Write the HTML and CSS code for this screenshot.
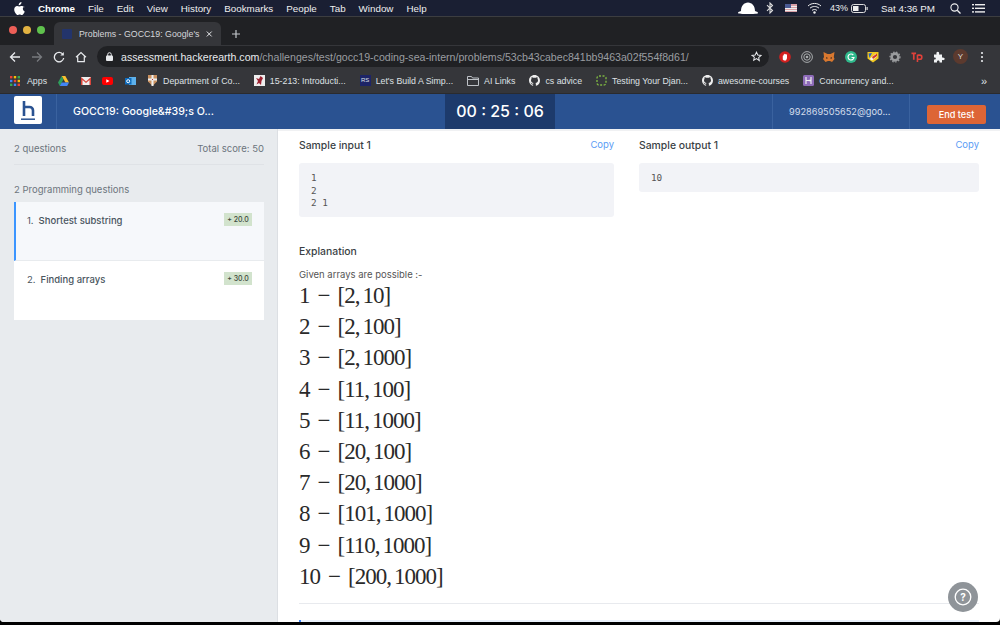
FILE: index.html
```html
<!DOCTYPE html>
<html lang="en">
<head>
    <meta charset="UTF-8">
    <title>Problems - GOCC19</title>
    <link rel="stylesheet" href="styles.css">
</head>
<body>

    <div class="menubar">
        <svg class="apple" width="11" height="13" viewBox="0 0 22 26"><path fill="#fff" d="M15 0c.2 2-.5 3.500-1.500 4.700-1 1.200-2.600 2.100-4.100 2-.2-1.800.6-3.600 1.500-4.600C12.100 1 13.800.2 15 0zM20.500 8.800c-1.700 1.100-2.800 2.800-2.800 4.800 0 2.400 1.400 4.300 3.800 5.200-.6 1.700-1.400 3.200-2.400 4.600-1.100 1.500-2.200 2.600-3.800 2.600s-2.100-1-4-1-2.500 1-4 1-2.700-1.300-3.900-3C1.400 20.600.4 17.700.4 15c0-4.600 3-7.100 5.900-7.100 1.600 0 2.900 1 4 1s2.500-1.100 4.300-1.100c2.300 0 4.400.9 5.900 3z"/></svg>
        <span class="menu-app">Chrome</span>
        <span>File</span>
        <span>Edit</span>
        <span>View</span>
        <span>History</span>
        <span>Bookmarks</span>
        <span>People</span>
        <span>Tab</span>
        <span>Window</span>
        <span>Help</span>
        <div class="menu-status">
            <svg width="22" height="12" viewBox="0 0 22 12"><path fill="#fff" d="M1 11c0-1 1.500-1.500 3-2 0-5 3-8.500 7-8.500s7 3.500 7 8.500c1.500.5 3 1 3 2 0 .6-1 1-10 1S1 11.600 1 11z"/></svg>
            <svg class="st-bt" width="8" height="12" viewBox="0 0 8 12"><path fill="none" stroke="#ddd" stroke-width="1.100" d="M1 3.200l5.500 5.300L4 11V1l2.500 2.500L1 8.800"/></svg>
            <svg class="st-flag" width="12" height="8" viewBox="0 0 12 8"><rect width="12" height="8" fill="#d9a0a6"/><rect y="2" width="12" height="1" fill="#eee"/><rect y="4" width="12" height="1" fill="#eee"/><rect y="6" width="12" height="1" fill="#eee"/><rect width="6" height="4" fill="#4a5a94"/></svg>
            <svg class="st-wifi" width="15" height="12" viewBox="0 0 15 12"><g fill="none" stroke="#eee" stroke-width="1"><path d="M1 4c3.500-3.400 9.500-3.400 13 0"/><path d="M3 6.200c2.500-2.300 6.500-2.300 9 0"/><path d="M5 8.400c1.400-1.200 3.600-1.200 5 0"/></g><circle cx="7.500" cy="10.500" r="1.200" fill="#eee"/></svg>
            <span class="st-pct">43%</span>
            <svg class="st-batt" width="17" height="9" viewBox="0 0 17 9"><rect x=".5" y=".5" width="14" height="8" rx="2" fill="none" stroke="#ddd"/><rect x="2" y="2" width="5.500" height="5" fill="#eee"/><rect x="15.500" y="3" width="1.200" height="3" fill="#ddd"/></svg>
            <span class="st-time">Sat 4:36 PM</span>
            <svg class="st-search" width="11" height="11" viewBox="0 0 11 11"><circle cx="4.500" cy="4.500" r="3.600" fill="none" stroke="#eee" stroke-width="1.100"/><path d="M7.200 7.200L10.500 10.500" stroke="#eee" stroke-width="1.300"/></svg>
            <svg class="st-list" width="13" height="9" viewBox="0 0 13 9"><g fill="#eee"><rect width="2" height="1.400"/><rect y="3.600" width="2" height="1.400"/><rect y="7.200" width="2" height="1.400"/><rect x="3" width="10" height="1.400"/><rect x="3" y="3.600" width="10" height="1.400"/><rect x="3" y="7.200" width="10" height="1.400"/></g></svg>
        </div>
    </div>

    <div class="tabstrip">
        <div class="lights">
            <i class="light red"></i>
            <i class="light yellow"></i>
            <i class="light green"></i>
        </div>
        <div class="tab">
            <i class="tab-favicon"></i>
            <span class="tab-title">Problems - GOCC19: Google's</span>
            <svg width="8" height="8" viewBox="0 0 8 8"><path d="M1 1l6 6M7 1L1 7" stroke="#e8eaed" stroke-width="1.200"/></svg>
        </div>
        <svg class="new-tab" width="10" height="10" viewBox="0 0 10 10"><path d="M5 1v8M1 5h8" stroke="#c4c7cc" stroke-width="1.200"/></svg>
    </div>

    <div class="toolbar">
        <svg class="nav" width="12" height="12" viewBox="0 0 12 12"><path d="M11 6H2M6 1.500L1.500 6 6 10.500" fill="none" stroke="#e8eaed" stroke-width="1.300"/></svg>
        <svg class="nav" width="12" height="12" viewBox="0 0 12 12"><path d="M1 6h9M6 1.500L10.500 6 6 10.500" fill="none" stroke="#777a7e" stroke-width="1.300"/></svg>
        <svg class="nav" width="12" height="12" viewBox="0 0 12 12"><path d="M10 3.500A4.700 4.700 0 1 0 10.700 7" fill="none" stroke="#e8eaed" stroke-width="1.300"/><path d="M10.800 1v3.500H7.300z" fill="#e8eaed"/></svg>
        <svg class="nav" width="12" height="12" viewBox="0 0 12 12"><path d="M1 6.200L6 1.500l5 4.700M2.700 5.500v5.200h6.600V5.500" fill="none" stroke="#e8eaed" stroke-width="1.200"/></svg>
        <div class="omnibox">
            <svg width="7" height="9" viewBox="0 0 7 9"><rect y="3.500" width="7" height="5.500" rx="1" fill="#e8eaed"/><path d="M1.700 4V2.500a1.800 1.800 0 0 1 3.600 0V4" fill="none" stroke="#e8eaed"/></svg>
            <span class="url"><b>assessment.hackerearth.com</b>/challenges/test/gocc19-coding-sea-intern/problems/53cb43cabec841bb9463a02f554f8d61/</span>
            <svg class="star" width="11" height="11" viewBox="0 0 24 24"><path d="M12 2.500l2.900 6.300 6.900.8-5.100 4.700 1.400 6.800L12 16.700l-6.100 3.400 1.400-6.800L2.200 9.600l6.900-.8z" fill="none" stroke="#e8eaed" stroke-width="2.200"/></svg>
        </div>
        <div class="extensions">
            <svg width="12" height="12" viewBox="0 0 12 12"><circle cx="6" cy="6" r="5.800" fill="#d3201f"/><path d="M3.800 8.500V5c0-1 1-1 1-.2V3.500c0-1 1-1 1.100 0 .1-.8 1.100-.8 1.100 0 .3-.4 1-.2 1 .4v3.400L7 9.500H5z" fill="#fff"/></svg>
            <svg width="12" height="12" viewBox="0 0 12 12"><g fill="none" stroke="#a9abad"><circle cx="6" cy="6" r="5.400"/><circle cx="6" cy="6" r="3.200"/></g><circle cx="6" cy="6" r="1.300" fill="#a9abad"/></svg>
            <svg width="12" height="12" viewBox="0 0 12 12"><path d="M.5 1l4 2h3l4-2-.7 5 .7 2-2.500 3L7 10H5l-2.500 1L0 8l1-2z" fill="#d9782f"/><path d="M3 6l2 1-1.500 1zM9 6L7 7l1.500 1z" fill="#3c2a20"/></svg>
            <svg width="12" height="12" viewBox="0 0 12 12"><circle cx="6" cy="6" r="6" fill="#2fb98c"/><path d="M8.300 4A3 3 0 1 0 9 6.500H6.500" fill="none" stroke="#fff" stroke-width="1.200"/></svg>
            <svg width="12" height="12" viewBox="0 0 12 12"><path d="M.5 1h11v6.500L6 11.500.5 7.500z" fill="#f2c81e"/><path d="M2.500 8L9 2.500l1 3L5 9.500z" fill="#f4f4f4"/><path d="M5 6l5-3.500v2.500L6 8z" fill="#d23a2c"/><path d="M1.500 2.500L5 2 2.500 7z" fill="#2b5fc4"/></svg>
            <svg width="12" height="12" viewBox="0 0 12 12"><circle cx="6" cy="6" r="3.400" fill="none" stroke="#9a9c9e" stroke-width="2.600"/><circle cx="6" cy="6" r="5" fill="none" stroke="#9a9c9e" stroke-width="1.200" stroke-dasharray="1.500 1.500"/></svg>
            <svg width="12" height="12" viewBox="0 0 13 12"><path d="M.5 2h5M3 2v7" fill="none" stroke="#e0413a" stroke-width="1.800"/><path d="M7 3.500v8M7 4h2.500a2 2 0 0 1 0 4.500H7" fill="none" stroke="#e0413a" stroke-width="1.700"/></svg>
            <svg width="12" height="12" viewBox="0 0 12 12"><path d="M1 3.500h2.500C3 1.500 4 .8 4.800.8S6.600 1.500 6 3.500h3v3c1.800-.4 2.700.5 2.700 1.300S10.800 9.500 9 9v2.500H6.500c.3-1.500-.4-2-1.200-2s-1.600.5-1.300 2H1V8.500c1.200.2 1.800-.3 1.800-1S2.200 6.200 1 6.500z" fill="#f1f3f4"/></svg>
            <span class="avatar">Y</span>
            <svg width="12" height="12" viewBox="0 0 12 12"><g fill="#e8eaed"><circle cx="6" cy="2" r="1.100"/><circle cx="6" cy="6" r="1.100"/><circle cx="6" cy="10" r="1.100"/></g></svg>
        </div>
    </div>

    <div class="bookmarks">
        <div class="bm bm-apps">
            <svg width="10" height="10" viewBox="0 0 10 10"><g><rect width="2.400" height="2.400" fill="#ea4335"/><rect x="3.800" width="2.400" height="2.400" fill="#fbbc05"/><rect x="7.600" width="2.400" height="2.400" fill="#34a853"/><rect y="3.800" width="2.400" height="2.400" fill="#4285f4"/><rect x="3.800" y="3.800" width="2.400" height="2.400" fill="#ea4335"/><rect x="7.600" y="3.800" width="2.400" height="2.400" fill="#fbbc05"/><rect y="7.600" width="2.400" height="2.400" fill="#34a853"/><rect x="3.800" y="7.600" width="2.400" height="2.400" fill="#4285f4"/><rect x="7.600" y="7.600" width="2.400" height="2.400" fill="#ea4335"/></g></svg>
            <span>Apps</span>
        </div>
        <svg class="bm-icon" width="11" height="10" viewBox="0 0 11 10"><path d="M3.700 0h3.600L11 6.500H7.400z" fill="#fbc02d"/><path d="M3.700 0L0 6.500 1.800 10l3.700-6.500z" fill="#2e9e5b"/><path d="M1.800 10h7.400L11 6.500H3.700z" fill="#4285f4"/></svg>
        <svg class="bm-icon" width="10" height="8" viewBox="0 0 10 8"><rect width="10" height="8" fill="#eee"/><path d="M0 0l5 4.500L10 0v8H8.500V3L5 6 1.500 3v5H0z" fill="#d8453b"/></svg>
        <svg class="bm-icon" width="11" height="8" viewBox="0 0 11 8"><rect width="11" height="8" rx="2" fill="#f00"/><path d="M4.300 2.200L7.500 4 4.300 5.800z" fill="#fff"/></svg>
        <svg class="bm-icon" width="11" height="10" viewBox="0 0 11 10"><rect x="4" y="1" width="7" height="8" fill="#5db1ec"/><rect y="2" width="6.500" height="6.500" fill="#0f6cbd"/><circle cx="3.200" cy="5.200" r="1.500" fill="none" stroke="#fff"/></svg>
        <div class="bm">
            <svg width="11" height="11" viewBox="0 0 9 11"><path d="M0 0h9v6.500L4.500 11 0 6.500z" fill="#c9905f"/><path d="M3.500 0h2v11h-2zM0 3.500h9v2H0z" fill="#eee"/><path d="M4 4h1v1H4z" fill="#b33"/></svg>
            <span>Department of Co...</span>
        </div>
        <div class="bm">
            <svg width="11" height="11" viewBox="0 0 11 11"><rect width="11" height="11" fill="#eee"/><path d="M6.500 1L5 4 2 3l2 3-1.500 3.500L5 8l2 2 .5-4L9 3z" fill="#9c2231"/></svg>
            <span>15-213: Introducti...</span>
        </div>
        <div class="bm">
            <span class="rs-icon">RS</span>
            <span>Let's Build A Simp...</span>
        </div>
        <div class="bm">
            <svg width="12" height="10" viewBox="0 0 12 10"><path d="M.5 9.500v-9h4l1 1.500h6v7.500zM.5 3.500h11" fill="none" stroke="#bdc1c6"/></svg>
            <span>AI Links</span>
        </div>
        <div class="bm">
            <svg class="gh" width="11" height="11" viewBox="0 0 16 16"><path fill="#eee" d="M8 0C3.580 0 0 3.580 0 8c0 3.540 2.290 6.530 5.470 7.590.4.070.55-.17.550-.38 0-.19-.01-.82-.01-1.490-2.010.37-2.530-.49-2.690-.94-.09-.23-.48-.94-.82-1.130-.28-.15-.68-.52-.01-.53.630-.01 1.080.58 1.230.82.720 1.210 1.870.87 2.330.66.070-.52.280-.87.510-1.070-1.780-.2-3.640-.89-3.640-3.950 0-.87.310-1.590.82-2.150-.08-.2-.36-1.020.08-2.120 0 0 .67-.21 2.200.82.640-.18 1.320-.27 2-.27s1.360.09 2 .27c1.530-1.040 2.200-.82 2.200-.82.440 1.100.16 1.920.08 2.120.51.56.82 1.270.82 2.150 0 3.070-1.870 3.750-3.650 3.950.29.25.54.73.54 1.480 0 1.070-.01 1.930-.01 2.200 0 .21.150.46.550.38A8.010 8.010 0 0 0 16 8c0-4.420-3.580-8-8-8z"/></svg>
            <span>cs advice</span>
        </div>
        <div class="bm">
            <svg width="11" height="11" viewBox="0 0 11 11"><rect x="1" y="1" width="9" height="9" rx="2" fill="none" stroke="#7cb342" stroke-width="1.400" stroke-dasharray="2 1.500"/></svg>
            <span>Testing Your Djan...</span>
        </div>
        <div class="bm">
            <svg class="gh" width="11" height="11" viewBox="0 0 16 16"><path fill="#eee" d="M8 0C3.580 0 0 3.580 0 8c0 3.540 2.290 6.530 5.470 7.590.4.070.55-.17.550-.38 0-.19-.01-.82-.01-1.490-2.010.37-2.530-.49-2.690-.94-.09-.23-.48-.94-.82-1.130-.28-.15-.68-.52-.01-.53.630-.01 1.080.58 1.230.82.720 1.210 1.870.87 2.330.66.070-.52.280-.87.510-1.070-1.780-.2-3.640-.89-3.640-3.950 0-.87.310-1.590.82-2.150-.08-.2-.36-1.020.08-2.120 0 0 .67-.21 2.200.82.640-.18 1.320-.27 2-.27s1.360.09 2 .27c1.530-1.040 2.200-.82 2.200-.82.440 1.100.16 1.920.08 2.120.51.56.82 1.270.82 2.150 0 3.070-1.870 3.750-3.650 3.950.29.25.54.73.54 1.480 0 1.070-.01 1.930-.01 2.200 0 .21.150.46.550.38A8.010 8.010 0 0 0 16 8c0-4.420-3.580-8-8-8z"/></svg>
            <span>awesome-courses</span>
        </div>
        <div class="bm">
            <svg width="11" height="11" viewBox="0 0 11 11"><rect width="11" height="11" rx="1.500" fill="#8e6bb8"/><path d="M3 2v7M3 5.500h2.500M8 2v3l-2.500.5L8 6v3" fill="none" stroke="#eee" stroke-width="1.200"/></svg>
            <span>Concurrency and...</span>
        </div>
        <span class="bm-more">»</span>
    </div>

    <header class="app-header">
        <div class="logo-cell">
            <div class="logo">
                <svg width="28" height="28" viewBox="0 0 28 28"><path d="M10 5v15M10 11h5.500a3.500 3.500 0 0 1 3.500 3.500V20" fill="none" stroke="#2a5291" stroke-width="2.600"/><path d="M7 23.200h14" stroke="#2a5291" stroke-width="1.500"/></svg>
            </div>
        </div>
        <div class="test-title">GOCC19: Google&amp;#39;s O...</div>
        <div class="timer">00 : 25 : 06</div>
        <div class="user-email">992869505652@goo...</div>
        <div class="end-cell"><button class="end-button">End test</button></div>
    </header>

    <div class="page">
        <aside class="sidebar">
            <div class="side-summary">
                <span>2 questions</span>
                <span>Total score: 50</span>
            </div>
            <div class="side-group">2 Programming questions</div>
            <div class="question active">
                <span class="q-num">1.</span>
                <span class="q-name">Shortest substring</span>
                <span class="q-score">+ 20.0</span>
            </div>
            <div class="question">
                <span class="q-num">2.</span>
                <span class="q-name">Finding arrays</span>
                <span class="q-score">+ 30.0</span>
            </div>
        </aside>

        <main class="content">
            <div class="samples">
                <section class="sample sample-in">
                    <div class="sample-head">
                        <h4>Sample input 1</h4>
                        <a class="copy">Copy</a>
                    </div>
                    <pre class="code">1
2
2 1</pre>
                </section>
                <section class="sample sample-out">
                    <div class="sample-head">
                        <h4>Sample output 1</h4>
                        <a class="copy">Copy</a>
                    </div>
                    <pre class="code">10</pre>
                </section>
            </div>

            <h4 class="expl-title">Explanation</h4>
            <p class="expl-text">Given arrays are possible :-</p>
            <div class="math">
                <div>1<i>−</i>[2,<u></u>10]</div>
                <div>2<i>−</i>[2,<u></u>100]</div>
                <div>3<i>−</i>[2,<u></u>1000]</div>
                <div>4<i>−</i>[11,<u></u>100]</div>
                <div>5<i>−</i>[11,<u></u>1000]</div>
                <div>6<i>−</i>[20,<u></u>100]</div>
                <div>7<i>−</i>[20,<u></u>1000]</div>
                <div>8<i>−</i>[101,<u></u>1000]</div>
                <div>9<i>−</i>[110,<u></u>1000]</div>
                <div>10<i>−</i>[200,<u></u>1000]</div>
            </div>
            <hr class="content-rule">
            <div class="next-bar"></div>
        </main>
    </div>

    <button class="help">
        <svg width="18" height="18" viewBox="0 0 18 18"><circle cx="9" cy="9" r="7.800" fill="none" stroke="#fff" stroke-width="1.300"/><text x="9" y="12.500" text-anchor="middle" class="help-mark">?</text></svg>
    </button>

</body>
</html>
```

FILE: styles.css
```css
* {
    box-sizing: border-box;
}
html, body {
    margin: 0;
    height: 625px;
    overflow: hidden;
}
body {
    position: relative;
    display: flex;
    flex-direction: column;
    background: #000;
    font-family: Inter, "Open Sans", sans-serif;
}

/* mac menu bar */
.menubar {
    height: 16px;
    background: #1a1f33;
    color: #eee;
    display: flex;
    align-items: center;
    gap: 13px;
    padding: 0 0 0 14px;
    font: 9.8px "Liberation Sans", Arial, sans-serif;
}
.menu-app {
    font-weight: bold;
    color: #fff;
}
.menu-status {
    margin-left: auto;
    display: flex;
    align-items: center;
    padding-right: 15px;
}
.st-bt { margin-left: 7px; }
.st-flag { margin-left: 11px; }
.st-wifi { margin-left: 10px; }
.st-pct { margin-left: 8px; font-size: 9px; }
.st-batt { margin-left: 3px; }
.st-time { margin-left: 13px; }
.st-search { margin-left: 15px; }
.st-list { margin-left: 11px; }

/* chrome */
.tabstrip {
    height: 29px;
    background: #202124;
    border-top: 1px solid #3c3d40;
    display: flex;
    align-items: flex-end;
    padding-left: 9px;
}
.lights {
    display: flex;
    gap: 6px;
    align-self: center;
    width: 45px;
    margin-top: -2px;
}
.light {
    width: 8px;
    height: 8px;
    border-radius: 50%;
}
.red { background: #ed5f57; }
.yellow { background: #e3b341; }
.green { background: #5fc24d; }
.tab {
    width: 167px;
    height: 23px;
    background: #35363a;
    border-radius: 6px 6px 0 0;
    display: flex;
    align-items: center;
    padding: 0 8px;
    gap: 7px;
    color: #d5d7da;
    font: 8.8px "Liberation Sans", Arial, sans-serif;
}
.tab-favicon {
    width: 10px;
    height: 10px;
    background: #23346b;
    border-radius: 1px;
    flex: none;
}
.tab-title {
    flex: 1;
    white-space: nowrap;
}
.new-tab {
    margin: 0 0 6px 10px;
}
.toolbar {
    height: 23px;
    background: #35363a;
    display: flex;
    align-items: center;
    padding-left: 9px;
}
.nav {
    margin-right: 10px;
    flex: none;
}
.omnibox {
    width: 672px;
    height: 21px;
    background: #202124;
    border-radius: 11px;
    display: flex;
    align-items: center;
    padding: 0 7px 0 9px;
    color: #9a9da1;
    font: 10.6px "Liberation Sans", Arial, sans-serif;
}
.url {
    margin-left: 8px;
    flex: 1;
    white-space: nowrap;
}
.url b {
    font-weight: normal;
    color: #e8eaed;
}
.extensions {
    display: flex;
    align-items: center;
    gap: 10px;
    margin-left: 10px;
}
.avatar {
    width: 15px;
    height: 15px;
    margin: 0 -2px;
    border-radius: 50%;
    background: #5c3a2e;
    color: #ddd;
    font: 8px/15px "Liberation Sans", Arial, sans-serif;
    text-align: center;
}
.bookmarks {
    height: 26px;
    background: #35363a;
    border-bottom: 1px solid #2a2b2e;
    display: flex;
    align-items: center;
    padding-left: 10px;
    color: #dfe1e5;
    font: 8.8px "Liberation Sans", Arial, sans-serif;
}
.bm {
    display: flex;
    align-items: center;
    gap: 5px;
    margin-right: 14px;
    white-space: nowrap;
}
.bm-apps {
    gap: 7px;
    margin-right: 11px;
}
.bm-icon {
    margin-right: 11.500px;
}
.rs-icon {
    width: 11px;
    height: 11px;
    background: #1d2467;
    color: #dfe1e5;
    font-size: 6px;
    line-height: 11px;
    text-align: center;
}
.bm-more {
    margin-left: auto;
    margin-right: 13px;
    font-size: 11px;
}

/* app header */
.app-header {
    height: 35px;
    background: #2a5291;
    display: flex;
    align-items: stretch;
    color: #fff;
}
.logo-cell {
    width: 57px;
    padding: 2px 0 0 14px;
    border-right: 1px solid #3a629f;
}
.logo {
    width: 28px;
    height: 28px;
    background: #fff;
    border-radius: 2px;
    display: flex;
}
.test-title {
    width: 388px;
    padding-left: 16px;
    font-size: 10.6px;
    font-weight: 500;
    line-height: 35px;
}
.timer {
    width: 110px;
    background: #1d3a6b;
    text-align: center;
    font-size: 16px;
    font-weight: 500;
    line-height: 35px;
}
.user-email {
    width: 138px;
    margin-left: 217px;
    padding-left: 16px;
    border-left: 1px solid #3a629f;
    border-right: 1px solid #3a629f;
    font-size: 9.2px;
    line-height: 35px;
    color: #d5deec;
}
.end-cell {
    padding: 8px 0 0 17px;
}
.end-button {
    width: 59px;
    height: 19px;
    padding: 0;
    background: #dd6536;
    border: none;
    border-radius: 2px;
    color: #fff;
    font: 500 9.2px Inter, sans-serif;
}

/* body of page */
.page {
    height: 493px;
    display: flex;
    background: #fff;
    border-radius: 0 0 4px 4px;
    overflow: hidden;
}
.sidebar {
    width: 278px;
    flex: none;
    background: #e8ebee;
    border-right: 1px solid #dcdfe3;
    padding: 0 13px 0 14px;
    color: #6c757d;
    font-size: 9.5px;
}
.side-summary {
    height: 33px;
    display: flex;
    justify-content: space-between;
    align-items: center;
    margin-top: 3px;
    border-bottom: 1px solid #dfe2e6;
}
.side-group {
    margin-top: 18px;
    margin-bottom: 6px;
    line-height: 13px;
}
.question {
    height: 59px;
    background: #fff;
    display: flex;
    align-items: flex-start;
    padding: 11px 12px 0 13px;
    color: #4a5560;
}
.question.active {
    background: #f6f8fb;
    border-left: 2px solid #3b95ff;
    border-bottom: 1px solid #e8ebee;
    padding-left: 11px;
}
.q-num {
    margin-right: 5px;
    line-height: 16px;
}
.q-name {
    flex: 1;
    font-weight: 500;
    line-height: 16px;
}
.q-score {
    width: 28px;
    background: #d2e3cd;
    color: #3c4a3c;
    font-size: 7px;
    line-height: 13px;
    text-align: center;
    white-space: nowrap;
    font-weight: 500;
}
.content {
    flex: 1;
    position: relative;
    border-top: 2px solid #f0f1f3;
    padding: 0 21px;
    color: #3a3f45;
}
.samples {
    display: flex;
    gap: 25px;
    padding-top: 7px;
}
.sample-in { width: 315px; }
.sample-out { flex: 1; }
.sample-head {
    height: 25px;
    display: flex;
    justify-content: space-between;
    align-items: flex-start;
}
h4 {
    margin: 0;
    font-size: 10.4px;
    line-height: 15px;
    font-weight: 500;
    color: #3a3f45;
}
.copy {
    color: #5b9cf5;
    font-size: 9.5px;
    line-height: 14px;
}
.code {
    margin: 0;
    padding: 9px 12px 7.500px;
    background: #f2f3f7;
    border-radius: 3px;
    color: #555;
    font: 9.3px/12.500px "DejaVu Sans Mono", monospace;
}
.expl-title {
    margin-top: 27px;
}
.expl-text {
    margin: 9px 0 0;
    font-size: 9.5px;
    line-height: 14px;
    color: #555;
}
.math {
    margin-top: -2px;
    font: 23px/31.2px "Liberation Serif", "Times New Roman", serif;
    letter-spacing: -1px;
    color: #2a2a2a;
}
.math i {
    font-style: normal;
    margin: 0 8px;
}
.math u {
    display: inline-block;
    width: 3px;
}
.content-rule {
    margin: 11px 0 0;
    border: none;
    border-top: 1px solid #e8eaee;
}
.next-bar {
    height: 3px;
    margin-top: 16px;
    border-left: 2px solid #3b82f6;
    background: #eaf1fb;
}

/* help button */
.help {
    position: absolute;
    left: 948px;
    top: 582px;
    width: 30px;
    height: 30px;
    padding: 6px;
    border: none;
    border-radius: 50%;
    background: #8f9499;
    display: flex;
}
.help-mark {
    font: bold 10px Inter, sans-serif;
    fill: #fff;
}
```
